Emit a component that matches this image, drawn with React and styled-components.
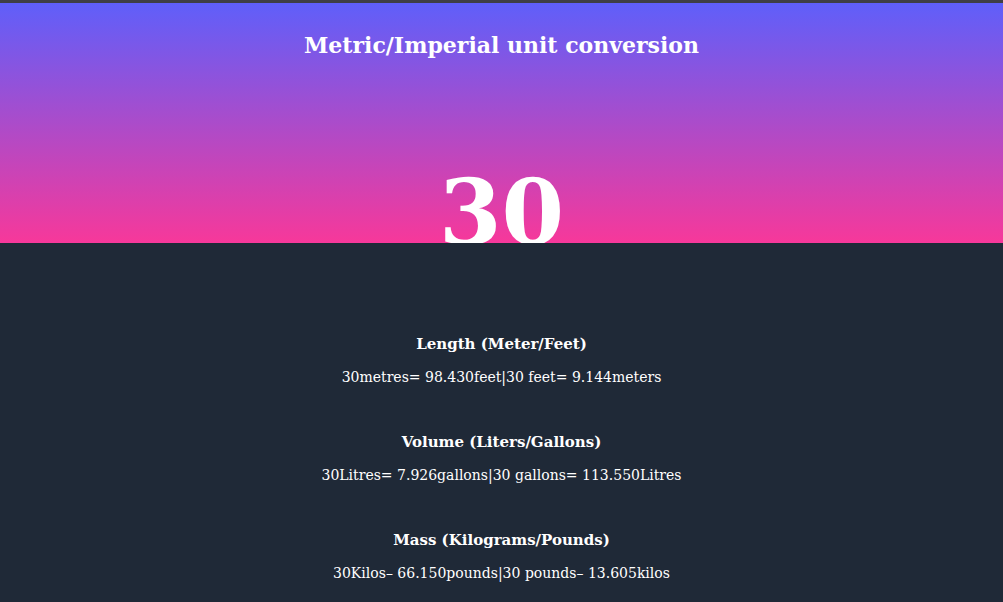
import React from "react";
import styled, { createGlobalStyle } from "styled-components";

const Global = createGlobalStyle`
  html, body { margin: 0; padding: 0; background: #1f2937; }
  body { font-family: "DejaVu Serif", "Liberation Serif", serif; }
`;

const Page = styled.div`
  min-height: 602px;
  background: #1f2937;
`;

const Hero = styled.header`
  border-top: 3px solid #3f3f46;
  height: 240px;
  box-sizing: content-box;
  background: linear-gradient(to bottom, #5f5ffa, #f7389a);
  display: flex;
  flex-direction: column;
  align-items: center;
  overflow: hidden;
`;

const Title = styled.h1`
  margin: 29px 0 0;
  font-size: 22px;
  line-height: 26px;
  font-weight: bold;
  color: #ffffff;
`;

const BigNumber = styled.div`
  margin-top: 104px;
  font-size: 90px;
  line-height: 100px;
  font-weight: bold;
  color: #ffffff;
`;

const Results = styled.main`
  display: flex;
  flex-direction: column;
  align-items: center;
  padding-top: 91px;
  gap: 45px;
  color: #ffffff;
`;

const Group = styled.section`
  display: flex;
  flex-direction: column;
  align-items: center;
  gap: 13px;
`;

const GroupTitle = styled.h3`
  margin: 0;
  font-size: 15px;
  line-height: 20px;
  font-weight: bold;
`;

const GroupValue = styled.p`
  margin: 0;
  font-size: 14px;
  line-height: 20px;
`;

const groups = [
  { title: "Length (Meter/Feet)", value: "30metres= 98.430feet|30 feet= 9.144meters" },
  { title: "Volume (Liters/Gallons)", value: "30Litres= 7.926gallons|30 gallons= 113.550Litres" },
  { title: "Mass (Kilograms/Pounds)", value: "30Kilos– 66.150pounds|30 pounds– 13.605kilos" },
];

export default function App() {
  return (
    <Page>
      <Global />
      <Hero>
        <Title>Metric/Imperial unit conversion</Title>
        <BigNumber>30</BigNumber>
      </Hero>
      <Results>
        {groups.map((g) => (
          <Group key={g.title}>
            <GroupTitle>{g.title}</GroupTitle>
            <GroupValue>{g.value}</GroupValue>
          </Group>
        ))}
      </Results>
    </Page>
  );
}
